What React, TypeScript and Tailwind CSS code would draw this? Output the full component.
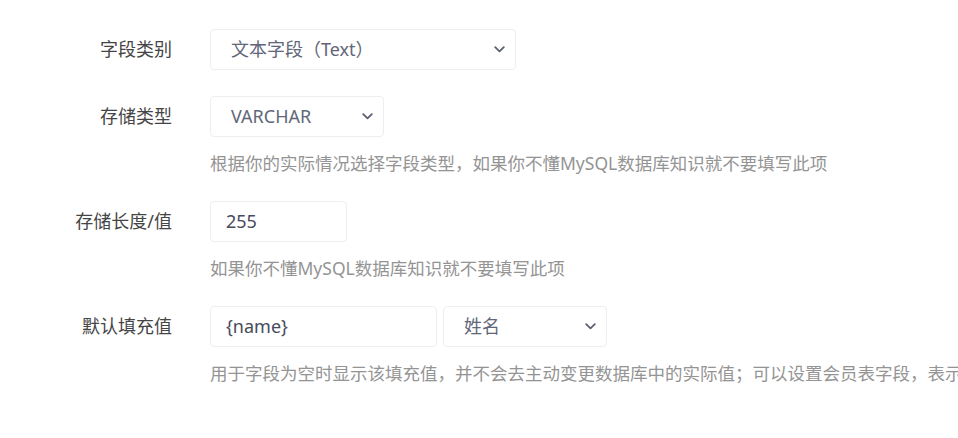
import React from "react";

const font = { fontFamily: '"Noto Sans", "Noto Sans CJK SC", sans-serif' };

function Chevron() {
  return (
    <svg width="11" height="7" viewBox="0 0 11 7" fill="none" className="shrink-0">
      <path d="M1.2 1.2 L5.5 5.3 L9.8 1.2" stroke="#5a5f72" strokeWidth="1.8" strokeLinecap="round" strokeLinejoin="round" />
    </svg>
  );
}

function SelectBox({ value, width }: { value: string; width: string }) {
  return (
    <div className={`${width} h-[41px] flex items-center justify-between pl-[20px] pr-[10px] border border-[#eceef2] rounded-[4px] bg-white text-[18px] text-[#62667a]`}>
      <span className="whitespace-nowrap">{value}</span>
      <Chevron />
    </div>
  );
}

function InputBox({ value, width }: { value: string; width: string }) {
  return (
    <div className={`${width} h-[41px] flex items-center pl-[15px] border border-[#eceef2] rounded-[4px] bg-white text-[18px] text-[#474a5a]`}>
      <span className="whitespace-nowrap">{value}</span>
    </div>
  );
}

function Row({ label, children, help, mb }: { label: string; children: React.ReactNode; help?: string; mb: string }) {
  return (
    <div className={`flex items-start ${mb}`}>
      <div className="w-[172px] shrink-0 h-[41px] flex items-center justify-end text-[18px] text-[#454545] whitespace-nowrap">
        {label}
      </div>
      <div className="ml-[38px] flex flex-col min-w-0">
        <div className="flex gap-[6px]">{children}</div>
        {help && (
          <div className="mt-[15px] leading-[22px] text-[17.5px] text-[#949494] whitespace-nowrap">{help}</div>
        )}
      </div>
    </div>
  );
}

export default function App() {
  return (
    <div className="w-[958px] h-[438px] overflow-hidden bg-white pt-[29px]" style={font}>
      <Row label="字段类别" mb="mb-[26px]">
        <SelectBox value="文本字段（Text）" width="w-[306px]" />
      </Row>
      <Row label="存储类型" mb="mb-[27px]" help="根据你的实际情况选择字段类型，如果你不懂MySQL数据库知识就不要填写此项">
        <SelectBox value="VARCHAR" width="w-[174px]" />
      </Row>
      <Row label="存储长度/值" mb="mb-[27px]" help="如果你不懂MySQL数据库知识就不要填写此项">
        <InputBox value="255" width="w-[137px]" />
      </Row>
      <Row label="默认填充值" mb="mb-[0px]" help="用于字段为空时显示该填充值，并不会去主动变更数据库中的实际值；可以设置会员表字段，表示当前登录会员的信息">
        <InputBox value="{name}" width="w-[227px]" />
        <SelectBox value="姓名" width="w-[164px]" />
      </Row>
    </div>
  );
}
